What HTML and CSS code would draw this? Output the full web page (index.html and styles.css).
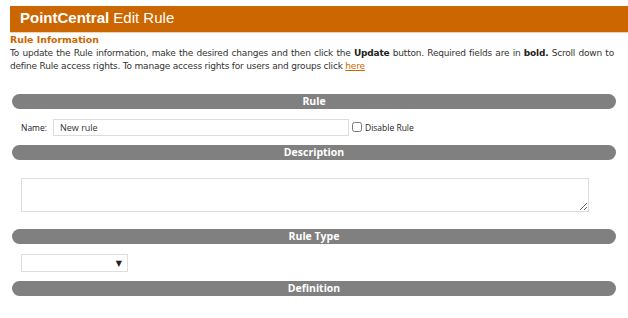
FILE: index.html
```html
<!DOCTYPE html>
<html lang="en">
<head>
    <meta charset="UTF-8">
    <title>PointCentral Edit Rule</title>
    <link rel="stylesheet" href="styles.css">
</head>
<body>

    <!-- Title bar -->
    <header class="title-bar">
        <b>PointCentral</b> Edit Rule
    </header>

    <!-- Intro text -->
    <div class="intro">
        <h1>Rule Information</h1>
        <p>To update the Rule information, make the desired changes and then click the <b>Update</b> button. Required fields are in <b>bold.</b> Scroll down to define Rule access rights. To manage access rights for users and groups click <a href="#">here</a></p>
    </div>

    <!-- Rule section -->
    <div class="section-bar">Rule</div>
    <div class="name-row">
        <label for="rule-name">Name:</label>
        <input type="text" id="rule-name" class="name-input" value="New rule">
        <input type="checkbox" id="disable-rule" class="check">
        <label for="disable-rule">Disable Rule</label>
    </div>

    <!-- Description section -->
    <div class="section-bar">Description</div>
    <div class="desc-row">
        <textarea class="desc-input"></textarea>
    </div>

    <!-- Rule type section -->
    <div class="section-bar">Rule Type</div>
    <div class="type-row">
        <div class="type-select"><span class="arrow">&#9660;</span></div>
    </div>

    <!-- Definition section -->
    <div class="section-bar">Definition</div>

</body>
</html>
```

FILE: styles.css
```css
body {
    margin: 0;
    padding: 0;
    background-color: #fff;
    font-family: "DejaVu Sans", Verdana, sans-serif;
    color: #333;
}
/* Orange title bar */
.title-bar {
    margin: 6px 0 0 10px;
    height: 26px;
    line-height: 24px;
    padding-left: 10px;
    background-color: #cc6600;
    border-bottom: 1px solid #f2d2b4;
    color: #fff;
    font-family: "Liberation Sans", Arial, sans-serif;
    font-size: 15px;
}
/* Rule information text */
.intro {
    padding: 0 14px 0 10px;
}
.intro h1 {
    margin: 1px 0 0 0;
    font-size: 9.4px;
    line-height: 12px;
    color: #cc6600;
}
.intro p {
    margin: 1px 0 0 0;
    font-size: 9px;
    letter-spacing: -0.2px;
    line-height: 13px;
    text-align: justify;
}
.intro b {
    color: #222;
}
.intro a {
    color: #cc6600;
}
/* Gray section headers */
.section-bar {
    margin: 0 12px 0 12px;
    height: 15px;
    line-height: 15px;
    border-radius: 8px;
    background-color: #808080;
    color: #fff;
    text-align: center;
    font-family: "Open Sans", Tahoma, sans-serif;
    font-weight: bold;
    font-size: 10.5px;
}
.intro + .section-bar {
    margin-top: 21px;
}
/* Name row */
.name-row {
    display: flex;
    align-items: center;
    height: 36px;
    padding-left: 21px;
    font-family: "Open Sans", Tahoma, sans-serif;
    font-size: 8.5px;
    color: #222;
}
.name-input {
    box-sizing: border-box;
    width: 296px;
    height: 17px;
    margin: 0 3px 0 6px;
    padding: 0 6px;
    border: 1px solid #ddd;
    font-family: "Open Sans", Tahoma, sans-serif;
    font-size: 9px;
    color: #333;
}
.check {
    width: 10px;
    height: 10px;
    margin: 0 3px 0 0;
}
/* Description row */
.desc-row {
    padding: 18px 0 17px 21px;
    line-height: 0;
}
.desc-input {
    box-sizing: border-box;
    width: 568px;
    height: 34px;
    margin: 0;
    border: 1px solid #ddd;
}
/* Rule type row */
.type-row {
    padding: 10px 0 9px 21px;
}
.type-select {
    box-sizing: border-box;
    width: 107px;
    height: 18px;
    border: 1px solid #ddd;
    display: flex;
    justify-content: flex-end;
    align-items: center;
    padding-right: 5px;
}
.arrow {
    font-size: 8px;
    color: #222;
}
```
